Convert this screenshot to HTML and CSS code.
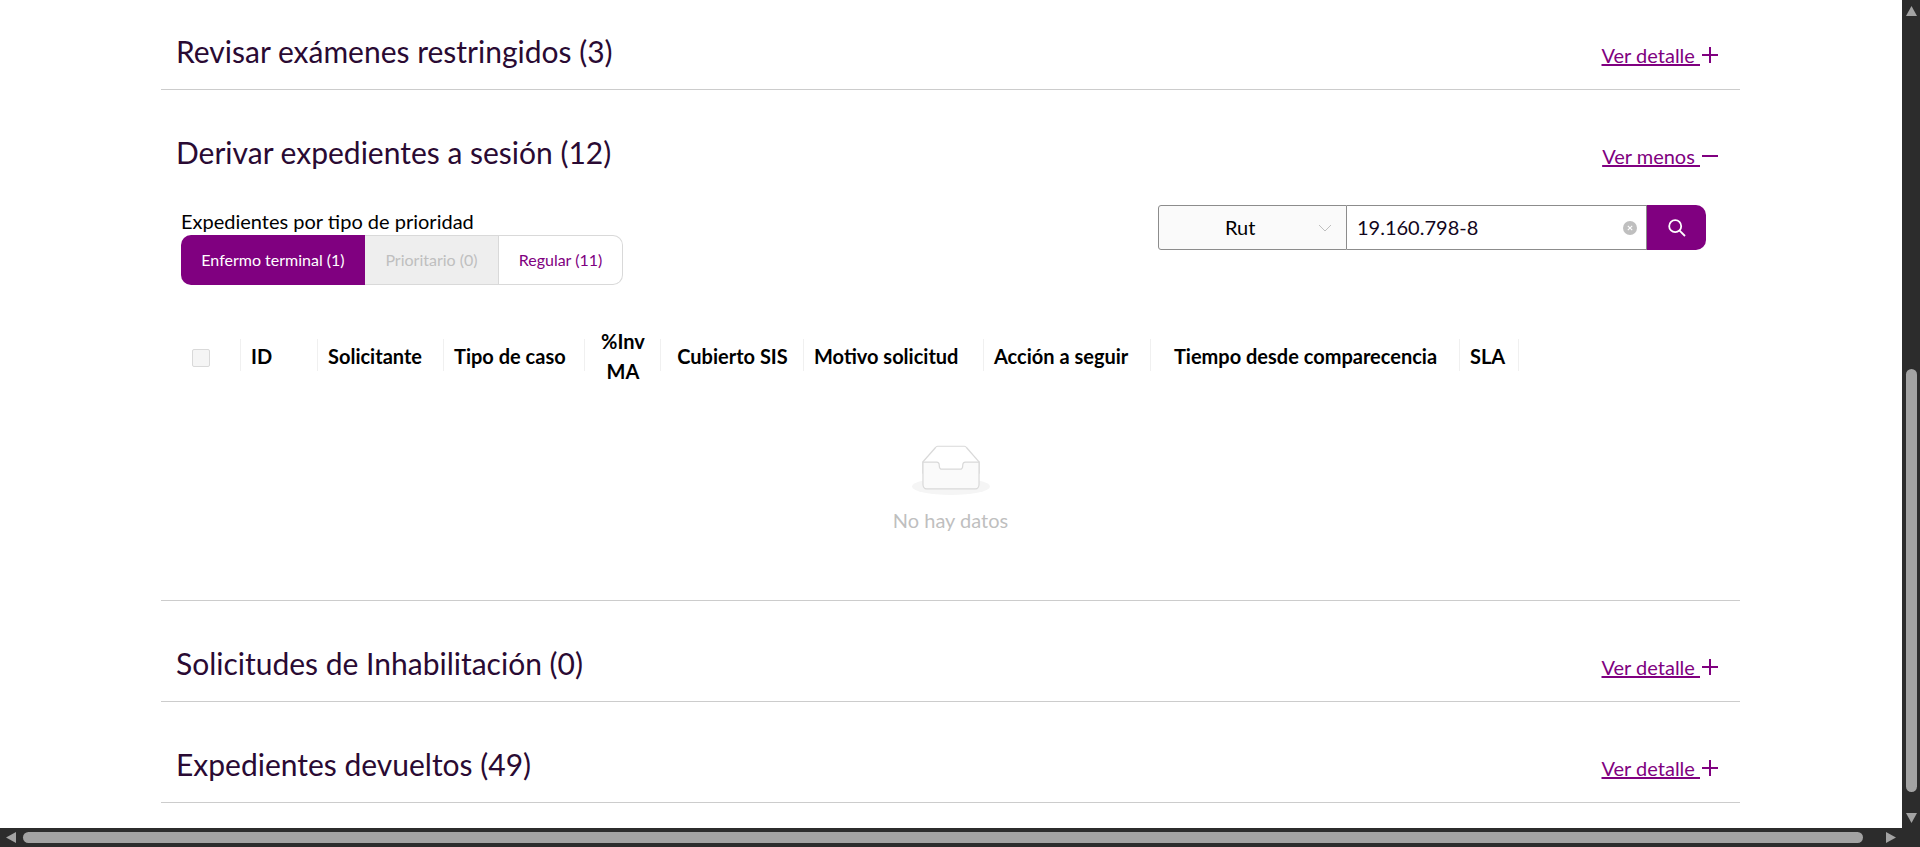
FILE: index.html
```html
<!DOCTYPE html>
<html lang="es">
<head>
    <meta charset="UTF-8">
    <meta name="viewport" content="width=device-width, initial-scale=1.0">
    <title>Expedientes</title>
    <link rel="stylesheet" href="styles.css">
</head>
<body>
    <div class="window">
        <main class="view">
            <div class="page">
                <section class="section">
                    <div class="section-head">
                        <h2>Revisar exámenes restringidos (3)</h2>
                        <a class="toggle" href="#"><span>Ver detalle&nbsp;</span><i class="sign plus"></i></a>
                    </div>
                </section>

                <section class="section open">
                    <div class="section-head">
                        <h2>Derivar expedientes a sesión (12)</h2>
                        <a class="toggle" href="#"><span>Ver menos&nbsp;</span><i class="sign"></i></a>
                    </div>

                    <div class="toolbar">
                        <div class="priority">
                            <p>Expedientes por tipo de prioridad</p>
                            <div class="tabs">
                                <button type="button" class="tab active">Enfermo terminal (1)</button>
                                <button type="button" class="tab off">Prioritario (0)</button>
                                <button type="button" class="tab">Regular (11)</button>
                            </div>
                        </div>
                        <div class="search">
                            <div class="search-type">
                                <span>Rut</span>
                                <svg width="14" height="8" viewBox="0 0 14 8"><path d="M1 1l6 6 6-6" fill="none" stroke="#bfbfbf"/></svg>
                            </div>
                            <div class="search-value">
                                <span>19.160.798-8</span>
                                <svg width="14" height="14" viewBox="0 0 14 14"><circle cx="7" cy="7" r="7" fill="#bfbfbf"/><path d="M4.8 4.8l4.4 4.4M9.2 4.8l-4.4 4.4" stroke="#fff" stroke-width="1.1"/></svg>
                            </div>
                            <button type="button" class="search-go">
                                <svg width="18" height="18" viewBox="0 0 18 18"><circle cx="7.2" cy="7.2" r="6" fill="none" stroke="#fff" stroke-width="1.8"/><path d="M11.6 11.6l5.4 5.4" stroke="#fff" stroke-width="1.8"/></svg>
                            </button>
                        </div>
                    </div>

                    <table class="cases">
                        <colgroup>
                            <col class="c1"><col class="c2"><col class="c3"><col class="c4"><col class="c5">
                            <col class="c6"><col class="c7"><col class="c8"><col class="c9"><col class="c10">
                        </colgroup>
                        <thead>
                            <tr>
                                <th class="check"><span class="box"></span></th>
                                <th>ID</th>
                                <th>Solicitante</th>
                                <th>Tipo de caso</th>
                                <th class="mid">%Inv<br>MA</th>
                                <th class="mid">Cubierto SIS</th>
                                <th>Motivo solicitud</th>
                                <th>Acción a seguir</th>
                                <th class="mid">Tiempo desde comparecencia</th>
                                <th>SLA</th>
                            </tr>
                        </thead>
                    </table>

                    <div class="empty">
                        <svg width="78" height="50" viewBox="0 0 64 41"><g transform="translate(0 1)" fill="none" fill-rule="evenodd"><ellipse fill="#f5f5f5" cx="32" cy="33" rx="32" ry="7"/><g fill-rule="nonzero" stroke="#d9d9d9"><path d="M55 12.76L44.854 1.258C44.367.474 43.656 0 42.907 0H21.093c-.749 0-1.46.474-1.947 1.257L9 12.761V22h46v-9.24z"/><path d="M41.613 15.931c0-1.605.994-2.93 2.227-2.931H55v18.137C55 33.26 53.68 35 52.05 35h-40.1C10.32 35 9 33.259 9 31.137V13h11.16c1.233 0 2.227 1.323 2.227 2.928v.022c0 1.605 1.005 2.901 2.237 2.901h14.752c1.232 0 2.237-1.308 2.237-2.913v-.007z" fill="#fafafa"/></g></g></svg>
                        <p>No hay datos</p>
                    </div>
                </section>

                <section class="section">
                    <div class="section-head">
                        <h2>Solicitudes de Inhabilitación (0)</h2>
                        <a class="toggle" href="#"><span>Ver detalle&nbsp;</span><i class="sign plus"></i></a>
                    </div>
                </section>

                <section class="section">
                    <div class="section-head">
                        <h2>Expedientes devueltos (49)</h2>
                        <a class="toggle" href="#"><span>Ver detalle&nbsp;</span><i class="sign plus"></i></a>
                    </div>
                </section>
            </div>
        </main>

        <div class="vbar">
            <svg width="11" height="10" viewBox="0 0 11 10"><path d="M5.5 0L11 10H0z"/></svg>
            <div class="vtrack"><div class="vthumb"></div></div>
            <svg width="11" height="10" viewBox="0 0 11 10"><path d="M5.5 10L11 0H0z"/></svg>
        </div>
        <div class="hbar">
            <svg width="10" height="11" viewBox="0 0 10 11"><path d="M0 5.5L10 0v11z"/></svg>
            <div class="hthumb"></div>
            <svg width="10" height="11" viewBox="0 0 10 11"><path d="M10 5.5L0 0v11z"/></svg>
        </div>
        <div class="corner"></div>
    </div>
</body>
</html>
```

FILE: styles.css
```css
* {
    box-sizing: border-box;
}
html, body {
    height: 100%;
    margin: 0;
    overflow: hidden;
}
body {
    background-color: #ffffff;
    color: #000000;
    font-family: Lato, Arial, sans-serif;
}
.window {
    display: grid;
    grid-template-columns: 1fr 19px;
    grid-template-rows: 1fr 19px;
    height: 100vh;
}
.view {
    overflow: hidden;
    padding-left: 161px;
}
.page {
    width: 1579px;
    margin-top: -11px;
}

/* sections */
.section {
    border-bottom: 1px solid #cccccc;
}
.section-head {
    display: flex;
    justify-content: space-between;
    height: 100px;
    padding: 45px 22px 0 15px;
}
.open .section-head {
    height: 115px;
}
.section-head h2 {
    margin: 0;
    font-size: 30px;
    font-weight: 400;
    line-height: 34px;
    color: #2a0a33;
}
.toggle {
    display: flex;
    align-items: center;
    height: 24px;
    margin-top: 9px;
    font-size: 20px;
    color: #800080;
}
.sign {
    position: relative;
    display: block;
    width: 16px;
    height: 16px;
    margin-left: 2px;
}
.sign::before, .plus::after {
    content: "";
    position: absolute;
    left: 0;
    top: 7px;
    width: 16px;
    height: 2px;
    background-color: #800080;
}
.plus::after {
    left: 7px;
    top: 0;
    width: 2px;
    height: 16px;
}

/* toolbar */
.toolbar {
    display: flex;
    justify-content: space-between;
    align-items: flex-start;
    margin: 0 34px 0 20px;
}
.priority {
    padding-top: 4px;
}
.priority p {
    margin: 0 0 2px;
    font-size: 20px;
    line-height: 24px;
}
.tabs {
    display: flex;
    height: 50px;
}
.tab {
    padding: 0 0 2px;
    border: 1px solid #d9d9d9;
    border-left: none;
    background-color: #ffffff;
    color: #800080;
    font-family: inherit;
    font-size: 16px;
}
.tab.active {
    width: 184px;
    border: none;
    border-radius: 10px 0 0 10px;
    background-color: #800080;
    color: #ffffff;
}
.tab.off {
    width: 134px;
    background-color: #eeeeee;
    color: #bfbfbf;
}
.tab:last-child {
    width: 124px;
    border-radius: 0 10px 10px 0;
}
.search {
    display: flex;
    width: 548px;
    height: 45px;
}
.search-type {
    display: flex;
    align-items: center;
    width: 189px;
    padding: 0 14px 0 66px;
    justify-content: space-between;
    border: 1px solid #8c8c8c;
    border-radius: 3px 0 0 3px;
    background-color: #fafafa;
    font-size: 20px;
}
.search-type span, .search-value span {
    padding-bottom: 2px;
}
.search-value {
    display: flex;
    flex: 1;
    align-items: center;
    justify-content: space-between;
    padding: 0 9px 0 10px;
    border: 1px solid #8c8c8c;
    border-left: none;
    font-size: 20px;
    color: #12061c;
}
.search-go {
    display: flex;
    align-items: center;
    justify-content: center;
    width: 59px;
    padding: 0;
    border: none;
    border-radius: 0 10px 10px 0;
    background-color: #800080;
}

/* table */
.cases {
    table-layout: fixed;
    width: 1338px;
    margin: 41px 0 0 20px;
    border-collapse: collapse;
}
.c1 { width: 60px; }
.c2 { width: 77px; }
.c3 { width: 126px; }
.c4 { width: 141px; }
.c5 { width: 76px; }
.c6 { width: 143px; }
.c7 { width: 180px; }
.c8 { width: 167px; }
.c9 { width: 309px; }
.c10 { width: 59px; }
.cases th {
    position: relative;
    padding: 0 10px;
    font-size: 20px;
    font-weight: 700;
    line-height: 30px;
    text-align: left;
    white-space: nowrap;
}
.cases th::after {
    content: "";
    position: absolute;
    right: 0;
    top: 13px;
    width: 1px;
    height: 32px;
    background-color: #f0f0f0;
}
.cases .mid {
    text-align: center;
}
.cases .check {
    padding-top: 4px;
    padding-left: 11px;
}
.box {
    display: block;
    width: 18px;
    height: 18px;
    border: 1px solid #d9d9d9;
    border-radius: 2px;
    background-color: #f5f5f5;
}

/* empty state */
.empty {
    padding: 59px 0 68px;
    text-align: center;
}
.empty svg {
    display: block;
    margin: 0 auto;
}
.empty p {
    margin: 13px 0 0;
    font-size: 20px;
    line-height: 24px;
    color: #bfbfbf;
}

/* scrollbars */
.vbar {
    display: flex;
    flex-direction: column;
    align-items: center;
    justify-content: space-between;
    padding: 6px 0 5px;
    background-color: #2c2c2c;
}
.vbar svg, .hbar svg {
    display: block;
    fill: #a3a3a3;
}
.vtrack {
    flex: 1;
    width: 11px;
    padding-top: 353px;
}
.vthumb {
    width: 11px;
    height: 423px;
    border-radius: 6px;
    background-color: #a3a3a3;
}
.hbar {
    display: flex;
    align-items: center;
    padding: 0 6px;
    background-color: #2c2c2c;
}
.hthumb {
    width: 1840px;
    height: 11px;
    margin: 0 23px 0 7px;
    border-radius: 6px;
    background-color: #a3a3a3;
}
.corner {
    background-color: #2c2c2c;
}
```
